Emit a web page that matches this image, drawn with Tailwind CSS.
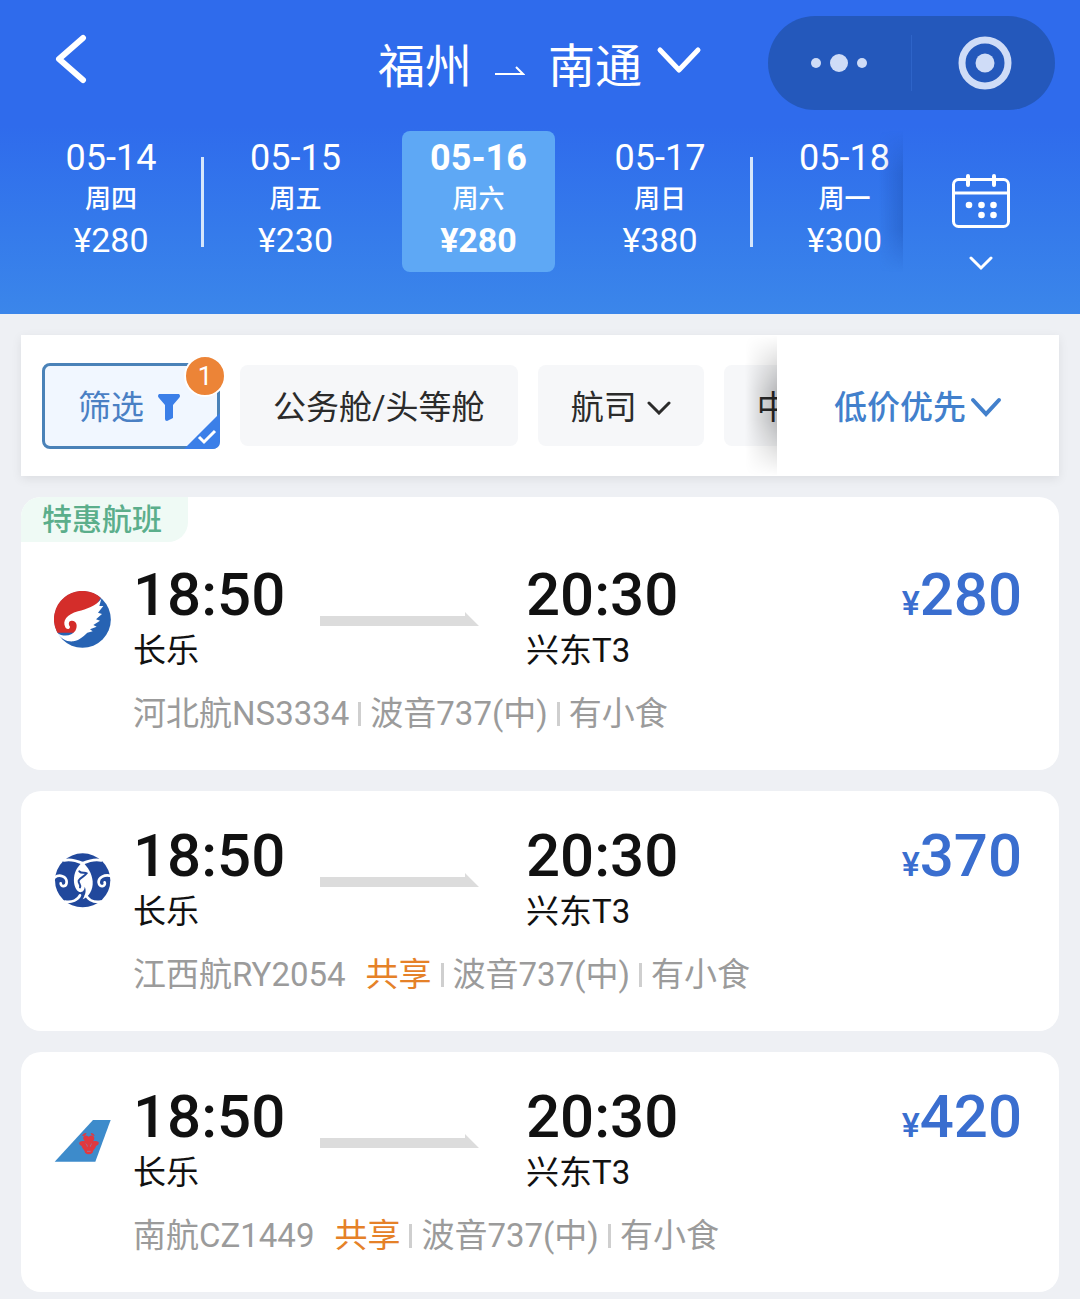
<!doctype html>
<html lang="zh-CN">
<head>
  <meta charset="utf-8" />
  <meta name="viewport" content="width=device-width,initial-scale=1" />
  <title>福州 - 南通 航班</title>
  <script src="https://cdn.jsdelivr.net/npm/@tailwindcss/browser@4"></script>
</head>
<body class="min-h-screen bg-[#eef0f4] font-[Roboto,'Noto_Sans_CJK_SC',sans-serif] text-[#111111]">

  <header class="bg-linear-to-b from-[#2f6bec] from-40% to-[#3b86ea] pt-4 pb-[42px] text-white">
    <div class="grid h-[94px] grid-cols-[1fr_auto_1fr] items-center">
      <button class="ml-[54px] justify-self-start pb-2" aria-label="返回">
        <svg class="h-[50px] w-[34px]" viewBox="0 0 34 50" fill="none" stroke="currentColor" stroke-width="6" stroke-linecap="round" stroke-linejoin="round"><path d="M29 4 5 25l24 21" /></svg>
      </button>
      <button class="flex items-center pt-2 text-[47px] leading-[60px]">
        <span>福州</span>
        <svg class="mx-[23px] mt-2 h-[12px] w-[30px]" viewBox="0 0 30 12" fill="none" stroke="currentColor" stroke-width="2"><path d="M0 9h28L21 2" /></svg>
        <span>南通</span>
        <svg class="mb-3 ml-[14px] h-[30px] w-[46px]" viewBox="0 0 46 30" fill="none" stroke="currentColor" stroke-width="5" stroke-linecap="round" stroke-linejoin="round"><path d="m4 4 19 20L42 4" /></svg>
      </button>
      <div class="mr-[25px] flex h-[94px] w-[287px] items-center justify-self-end rounded-full bg-[#2458bb] text-[#cfdcf7]">
        <button class="flex flex-1 justify-center" aria-label="更多">
          <svg class="h-[20px] w-[58px]" viewBox="0 0 58 20" fill="currentColor"><circle cx="5" cy="10" r="5" /><circle cx="28" cy="10" r="9" /><circle cx="51" cy="10" r="5" /></svg>
        </button>
        <span class="h-[56px] w-px bg-[#2e64c8]"></span>
        <button class="flex flex-1 justify-center" aria-label="关闭">
          <svg class="size-[56px]" viewBox="0 0 56 56"><circle cx="29" cy="28" r="23" fill="none" stroke="currentColor" stroke-width="7" /><circle cx="29" cy="28" r="9.5" fill="currentColor" /></svg>
        </button>
      </div>
    </div>

    <!-- date strip -->
    <nav class="mt-[21px] flex h-[141px]" aria-label="日期">
      <div class="flex flex-1 overflow-hidden pl-[21px] text-[34px] leading-[41px]">
        <button class="flex w-[183px] shrink-0 items-center">
          <span class="flex flex-1 flex-col pb-1"><span class="text-[36px]">05-14</span><span class="text-[26px] font-medium">周四</span><span>¥280</span></span>
          <span class="h-[90px] w-[3px] bg-[#d5e6fb]"></span>
        </button>
        <button class="flex w-[183px] shrink-0 items-center">
          <span class="flex flex-1 flex-col pb-1"><span class="text-[36px]">05-15</span><span class="text-[26px] font-medium">周五</span><span>¥230</span></span>
        </button>
        <button class="flex w-[183px] shrink-0 px-[15px]" aria-current="date">
          <span class="flex h-full flex-1 flex-col justify-center rounded-lg bg-[#5ea8f5] pb-1 font-bold"><span class="text-[36px]">05-16</span><span class="text-[26px] font-medium">周六</span><span>¥280</span></span>
        </button>
        <button class="flex w-[183px] shrink-0 items-center">
          <span class="flex flex-1 flex-col pb-1"><span class="text-[36px]">05-17</span><span class="text-[26px] font-medium">周日</span><span>¥380</span></span>
          <span class="h-[90px] w-[3px] bg-[#d5e6fb]"></span>
        </button>
        <button class="flex w-[183px] shrink-0 items-center">
          <span class="flex flex-1 flex-col pb-1"><span class="text-[36px]">05-18</span><span class="text-[26px] font-medium">周一</span><span>¥300</span></span>
        </button>
      </div>
      <button class="relative flex w-[177px] flex-col items-center justify-end pr-[21px]" aria-label="选择日期">
        <span class="absolute inset-y-0 -left-6 w-6 bg-linear-to-r from-transparent to-[#1d4fb0]/40 mask-y-from-70% mask-y-to-100%"></span>
        <svg class="h-[56px] w-[60px]" viewBox="0 0 60 56" fill="none" stroke="currentColor" stroke-width="3">
          <rect x="2.500" y="6.500" width="55" height="47" rx="5" />
          <path d="M3 20h54" />
          <path d="M17 3v9M43 3v9" stroke-width="4" stroke-linecap="round" />
          <g fill="currentColor" stroke="none"><circle cx="18" cy="32" r="3.300" /><circle cx="30.500" cy="32" r="3.300" /><circle cx="42.500" cy="32" r="3.300" /><circle cx="30.500" cy="42" r="3.300" /><circle cx="42.500" cy="42" r="3.300" /></g>
        </svg>
        <svg class="mt-[27px] h-[16px] w-[24px]" viewBox="0 0 24 16" fill="none" stroke="currentColor" stroke-width="3" stroke-linecap="round"><path d="m2 2 10 10L22 2" /></svg>
      </button>
    </nav>
  </header>

  <main class="flex flex-col gap-[21px] px-[21px] pt-[21px] pb-2">
    <!-- filters -->
    <section class="flex h-[141px] bg-white text-[33px] leading-[44px] text-[#2b2b2b] shadow-[0_3px_10px_rgba(0,0,0,0.08)]">
      <div class="flex flex-1 items-center gap-5 overflow-hidden pl-[21px]">
        <button class="relative flex h-[86px] w-[178px] shrink-0 items-center gap-[14px] rounded-lg border-3 border-[#4a82b8] bg-[#f1f7ff] pt-1 pl-[33px] text-[#4a80c4]">
          筛选
          <svg class="h-[27px] w-[22px]" viewBox="0 0 22 27" fill="#3b7fe8"><path d="M1 0h20q2 2 0 4l-6 7v13l-6 3q-2 0-2-2V11L1 4q-2-2 0-4z" /></svg>
          <svg class="absolute -right-[3px] -bottom-[3px] h-[36px] w-[36px]" viewBox="0 0 36 36"><path d="M36 0v28q0 8-8 8H0z" fill="#3b7fe8" /><path d="m15 24 5 5 11-11" fill="none" stroke="#fff" stroke-width="3" /></svg>
          <span class="absolute -top-[11px] -right-[9px] size-[42px] rounded-full border-2 border-white bg-[#ec8437] text-center text-[26px] leading-[38px] text-white">1</span>
        </button>
        <button class="h-[81px] shrink-0 rounded-lg bg-[#f6f7f9] px-[33px] pt-1">公务舱/头等舱</button>
        <button class="flex h-[81px] shrink-0 items-center gap-[10px] rounded-lg bg-[#f6f7f9] px-[33px] pt-1">
          航司
          <svg class="h-[14px] w-[24px]" viewBox="0 0 24 14" fill="none" stroke="currentColor" stroke-width="3" stroke-linecap="round"><path d="m2 2 10 10L22 2" /></svg>
        </button>
        <button class="h-[81px] shrink-0 rounded-lg bg-[#f6f7f9] px-[33px] pt-1">中转</button>
      </div>
      <button class="relative flex w-[282px] items-center justify-center gap-[4px] bg-white pt-1 font-medium text-[#4280cc]">
        <span class="absolute inset-y-0 -left-8 w-8 bg-linear-to-r from-transparent to-black/25 mask-y-from-60% mask-y-to-100%"></span>
        低价优先
        <svg class="h-[22px] w-[32px]" viewBox="0 0 32 22" fill="none" stroke="currentColor" stroke-width="4" stroke-linecap="round"><path d="m3 3 13 14L29 3" /></svg>
      </button>
    </section>

    <!-- Hebei Airlines -->
    <article class="relative rounded-[20px] bg-white pt-[68px] pr-[37px] pb-[34px] pl-[33px]">
      <span class="absolute top-0 left-0 rounded-tl-[20px] rounded-br-[20px] bg-[#effaf5] pr-[26px] pl-[21px] text-[30px] leading-[45px] font-medium text-[#5bae8b]">特惠航班</span>
      <div class="flex items-center">
        <svg class="mr-[22px] size-[57px]" viewBox="12 15 171 171" role="img" aria-label="河北航">
          <circle cx="97.500" cy="100.500" r="85" fill="#2763b3" />
          <path d="M22 140A85 85 0 0 1 152 35L90 140Z" fill="#d42d2a" />
          <path d="M154 38C136 62 110 68 84 76C50 86 36 104 46 124C50 132 60 130 60 122C54 114 56 103 66 104C80 104 84 120 76 134C66 150 40 154 20 140C34 158 50 168 70 166C90 162 104 148 112 140L128 136L120 130L140 122L130 117L150 104L138 100L156 84L144 80L160 60L148 60Z" fill="#fff" />
        </svg>
        <div class="w-[187px]">
          <p class="mb-1 text-[60px] leading-[60px] font-medium">18:50</p>
          <p class="text-[33px] leading-[44px]">长乐</p>
        </div>
        <svg class="mr-[47px] h-[14px] w-[159px]" viewBox="0 0 159 14" fill="#dcdcdc"><path d="M0 4h145V0l14 14H0z" /></svg>
        <div>
          <p class="mb-1 text-[60px] leading-[60px] font-medium">20:30</p>
          <p class="text-[33px] leading-[44px]">兴东T3</p>
        </div>
        <p class="ml-auto self-start text-[60px] leading-[60px] font-medium text-[#3a6ecf]"><span class="text-[34px]">¥</span>280</p>
      </div>
      <p class="mt-[19px] ml-[79px] flex items-center text-[33px] leading-[44px] text-[#9b9b9b]">
        河北航NS3334<span class="mx-[9px] h-6 w-[3px] bg-[#cfcfcf]"></span>波音737(中)<span class="mx-[9px] h-6 w-[3px] bg-[#cfcfcf]"></span>有小食
      </p>
    </article>

    <!-- Jiangxi Air -->
    <article class="rounded-[20px] bg-white pt-[35px] pr-[37px] pb-[34px] pl-[33px]">
      <div class="flex items-center">
        <svg class="mr-[22px] size-[57px]" viewBox="12 8 171 171" role="img" aria-label="江西航">
          <ellipse cx="98" cy="93" rx="83" ry="81" fill="#21489c" />
          <g fill="none" stroke="#fff" stroke-width="8" stroke-linecap="round">
            <path d="M42 33C62 28 80 34 98 42C116 34 134 28 154 33" />
            <path d="M46 157C66 160 84 152 90 138M152 157C132 160 116 152 108 138" />
            <path d="M14 84C28 74 50 80 50 98C50 114 32 114 32 102" />
            <path d="M184 80C164 74 144 84 146 100C148 116 168 112 164 99" />
          </g>
          <path d="M98 38C84 50 74 64 72 86C70 106 78 124 88 128C96 130 104 124 104 112C110 124 106 136 98 150C116 144 130 122 128 96C126 72 114 54 98 38Z" fill="#fff" />
          <path d="M88 66C94 74 104 68 110 72C104 82 90 84 86 94C84 102 94 106 90 114" fill="none" stroke="#21489c" stroke-width="6" stroke-linecap="round" />
        </svg>
        <div class="w-[187px]">
          <p class="mb-1 text-[60px] leading-[60px] font-medium">18:50</p>
          <p class="text-[33px] leading-[44px]">长乐</p>
        </div>
        <svg class="mr-[47px] h-[14px] w-[159px]" viewBox="0 0 159 14" fill="#dcdcdc"><path d="M0 4h145V0l14 14H0z" /></svg>
        <div>
          <p class="mb-1 text-[60px] leading-[60px] font-medium">20:30</p>
          <p class="text-[33px] leading-[44px]">兴东T3</p>
        </div>
        <p class="ml-auto self-start text-[60px] leading-[60px] font-medium text-[#3a6ecf]"><span class="text-[34px]">¥</span>370</p>
      </div>
      <p class="mt-[19px] ml-[79px] flex items-center text-[33px] leading-[44px] text-[#9b9b9b]">
        江西航RY2054<span class="ml-5 text-[#e58128]">共享</span><span class="mx-[9px] h-6 w-[3px] bg-[#cfcfcf]"></span>波音737(中)<span class="mx-[9px] h-6 w-[3px] bg-[#cfcfcf]"></span>有小食
      </p>
    </article>

    <!-- China Southern -->
    <article class="rounded-[20px] bg-white pt-[35px] pr-[37px] pb-[34px] pl-[33px]">
      <div class="flex items-center">
        <svg class="mr-[22px] size-[57px]" viewBox="43 37 171 171" role="img" aria-label="南航">
          <path d="M45 183L160 58H213L167 183Z" fill="#3d8bcb" />
          <g fill="#e0393f">
            <path d="M147 108C134 98 124 112 136 122C120 118 112 130 126 136C128 146 136 148 136 156Q147 166 159 156C159 148 167 146 169 136C184 130 178 118 160 122C170 112 160 98 147 108Z" />
            <path d="M127 106q4-10 14-9l-5 8zM153 97q10 0 12 9l-9-2z" />
          </g>
          <path d="M138 129q5 2 5 9M157 129q-5 2-5 9M142 152h11" fill="none" stroke="#a06f94" stroke-width="3" />
        </svg>
        <div class="w-[187px]">
          <p class="mb-1 text-[60px] leading-[60px] font-medium">18:50</p>
          <p class="text-[33px] leading-[44px]">长乐</p>
        </div>
        <svg class="mr-[47px] h-[14px] w-[159px]" viewBox="0 0 159 14" fill="#dcdcdc"><path d="M0 4h145V0l14 14H0z" /></svg>
        <div>
          <p class="mb-1 text-[60px] leading-[60px] font-medium">20:30</p>
          <p class="text-[33px] leading-[44px]">兴东T3</p>
        </div>
        <p class="ml-auto self-start text-[60px] leading-[60px] font-medium text-[#3a6ecf]"><span class="text-[34px]">¥</span>420</p>
      </div>
      <p class="mt-[19px] ml-[79px] flex items-center text-[33px] leading-[44px] text-[#9b9b9b]">
        南航CZ1449<span class="ml-5 text-[#e58128]">共享</span><span class="mx-[9px] h-6 w-[3px] bg-[#cfcfcf]"></span>波音737(中)<span class="mx-[9px] h-6 w-[3px] bg-[#cfcfcf]"></span>有小食
      </p>
    </article>
  </main>
</body>
</html>
